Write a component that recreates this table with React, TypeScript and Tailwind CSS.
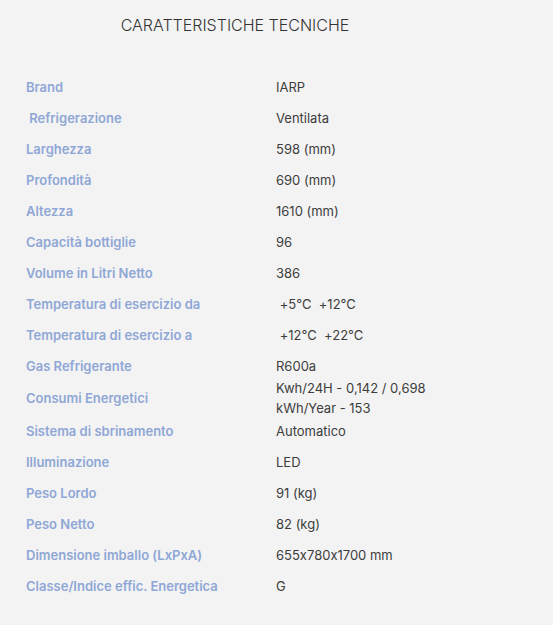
const specs: { label: string; value: string[]; tall?: boolean }[] = [
  { label: "Brand", value: ["IARP"] },
  { label: "\u00a0Refrigerazione", value: ["Ventilata"] },
  { label: "Larghezza", value: ["598 (mm)"] },
  { label: "Profondità", value: ["690 (mm)"] },
  { label: "Altezza", value: ["1610 (mm)"] },
  { label: "Capacità bottiglie", value: ["96"] },
  { label: "Volume in Litri Netto", value: ["386"] },
  { label: "Temperatura di esercizio da", value: ["\u00a0+5°C\u00a0 +12°C"] },
  { label: "Temperatura di esercizio a", value: ["\u00a0+12°C\u00a0 +22°C"] },
  { label: "Gas Refrigerante", value: ["R600a"] },
  { label: "Consumi Energetici", value: ["Kwh/24H - 0,142 / 0,698", "kWh/Year - 153"], tall: true },
  { label: "Sistema di sbrinamento", value: ["Automatico"] },
  { label: "Illuminazione", value: ["LED"] },
  { label: "Peso Lordo", value: ["91 (kg)"] },
  { label: "Peso Netto", value: ["82 (kg)"] },
  { label: "Dimensione imballo (LxPxA)", value: ["655x780x1700 mm"] },
  { label: "Classe/Indice effic. Energetica", value: ["G"] },
];

export default function App() {
  return (
    <div className="min-h-[625px] w-[553px] bg-[#f3f3f3] px-[26px] pt-[14px] font-['Inter','Open_Sans',sans-serif] [font-feature-settings:'calt'_0]">
      <h2 className="w-[418px] text-center text-[16px] font-light leading-[22px] text-[#333]">
        CARATTERISTICHE TECNICHE
      </h2>
      <div className="mt-[35px] flex flex-col">
        {specs.map((s) => (
          <div
            key={s.label}
            className={`flex items-center ${s.tall ? "h-[34px]" : "h-[31px]"}`}
          >
            <div className="w-[250px] whitespace-pre text-[13px] font-semibold leading-[20px] text-[#8fa7d6]">
              {s.label}
            </div>
            <div className="flex flex-col text-[13px] leading-[20px] text-[#3d3d3d]">
              {s.value.map((v) => (
                <span key={v} className="whitespace-pre">
                  {v}
                </span>
              ))}
            </div>
          </div>
        ))}
      </div>
    </div>
  );
}
